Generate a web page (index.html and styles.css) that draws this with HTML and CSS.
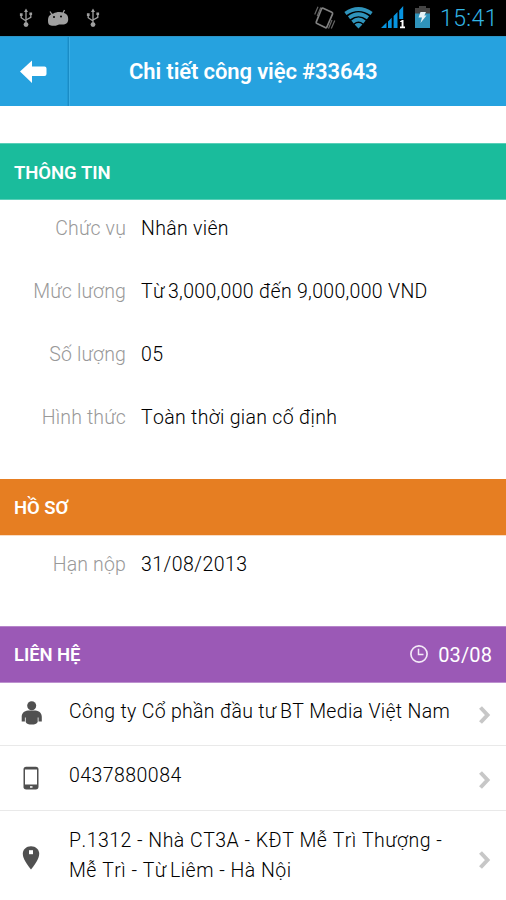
FILE: index.html
```html
<!DOCTYPE html>
<html lang="vi">
<head>
<meta charset="utf-8">
<title>Chi tiết công việc</title>
<link rel="stylesheet" href="styles.css">
</head>
<body>
<svg width="0" height="0" class="defs" aria-hidden="true">
  <symbol id="usb" viewBox="0 0 14 20">
    <path d="M7 3v13M2.2 6.500v3.200L7 13M11.800 6v3.400L7 12" fill="none" stroke="#a0a0a0" stroke-width="1.300"/>
    <path d="M7 .5 9 4H5z M.9 5.200h2.700v2.700H.9z M10.400 4.400h2.700v2.700h-2.700z" fill="#a0a0a0"/>
    <circle cx="7" cy="16.600" r="2.400" fill="#a0a0a0"/>
  </symbol>
  <symbol id="chevron" viewBox="0 0 14 20">
    <path d="M2.500 2.500 9.500 10 2.500 17.500" fill="none" stroke="#c7c7c7" stroke-width="4"/>
  </symbol>
</svg>
<div class="status">
  <div class="notes">
    <svg class="usb" width="14" height="20"><use href="#usb"/></svg>
    <svg class="droid" width="22" height="18" viewBox="0 0 22 18">
      <path d="M3 2.500l2 3M17.500 1l-1.500 3" stroke="#a0a0a0" stroke-width="1.300"/>
      <path d="M1 12C1 6.500 3.500 5 6.500 4.500c2.500-1.600 7-2 10-.7 3.500 1 4.700 3 4.700 6.200 0 4-2 5.500-6 5.500-2-.1-3.500 0-4.500.4-1.500.8-3.700 1-5.700.8C2 16.500 1 15 1 12z" fill="#a0a0a0"/>
      <circle cx="7" cy="8" r="1"/><circle cx="14" cy="7.500" r="1"/>
    </svg>
    <svg class="usb" width="14" height="20"><use href="#usb"/></svg>
  </div>
  <div class="signals">
    <svg width="22" height="24" viewBox="0 0 22 24">
      <path d="M9.200 2.300 17.800 6.300q1.200.6.700 1.800L12.900 21q-.6 1.200-1.700.6L3 17.600q-1.200-.6-.7-1.800L7.500 3q.6-1.200 1.700-.7z" fill="none" stroke="#808080" stroke-width="1.700"/>
      <path d="M.7 8.500 4 .8M3.200 10 6.800 1.500M20.800 14.500l-3.500 8M18 14l-3.500 8.500" stroke="#666" stroke-width="1.200"/>
    </svg>
    <svg class="wifi" width="29" height="22" viewBox="0 0 29 22">
      <g fill="none" stroke="#2f93bb" stroke-width="3.700">
        <path d="M1.400 6.500Q14.500-2.500 27.600 6.500"/><path d="M5 10.700Q14.500 3.800 24 10.700"/><path d="M8.500 15Q14.500 10 20.500 15"/>
      </g>
      <path d="M10.600 17.500q3.900-2.800 7.800 0L14.500 21.500z" fill="#2f93bb"/>
    </svg>
    <svg class="cell" width="25" height="23" viewBox="0 0 25 23">
      <path d="M0 22 5.500 16.500V22zM7 15.500l3.700-3.700V22H7zM12.600 10l3.900-4v16h-3.900zM18.200 4.500 22.200 0v22h-4z" fill="#0794e0"/>
      <path d="M18 13h6.500v9.500H18z"/>
      <path d="M19 15.500 21 14h1.500v6.500H24v1.700h-5v-1.700h1.600V16H19z" fill="#fff"/>
    </svg>
    <svg class="battery" width="15" height="22" viewBox="0 0 15 22">
      <path d="M4 0h7v2h4v6H0V2h4z" fill="#444"/><path d="M0 7.500h15V22H0z" fill="#2f93bb"/>
      <path d="M5.500 6h5.500L9.300 9.500h2.200l-6 7.500 1.500-5.500H3.500z" fill="#e6f3f8"/>
    </svg>
    <span class="clock">15:41</span>
  </div>
</div>
<header class="bar">
  <div class="back">
    <svg width="28" height="24" viewBox="0 0 28 24"><path d="M0 11.500 12 .5v6h12.500q2 0 2 2v5.500q0 2-2 2H12V23z" fill="#fff"/></svg>
  </div>
  <h1>Chi tiết công việc #33643</h1>
</header>
<section class="info">
  <h2 class="green">THÔNG TIN</h2>
  <dl>
    <dt>Chức vụ</dt><dd>Nhân viên</dd>
    <dt>Mức lương</dt><dd>Từ<span class="thin"> </span>3,000,000 đến 9,000,000 VND</dd>
    <dt>Số lượng</dt><dd>05</dd>
    <dt>Hình thức</dt><dd>Toàn thời gian cố định</dd>
  </dl>
</section>
<section class="profile">
  <h2 class="orange">HỒ SƠ</h2>
  <dl><dt>Hạn nộp</dt><dd class="deadline">31/08/2013</dd></dl>
</section>
<section class="contact">
  <h2 class="purple">LIÊN HỆ
    <span class="date">
      <svg width="20" height="20" viewBox="0 0 20 20" fill="none" stroke="#f3e9f7"><circle cx="10" cy="10" r="8.100" stroke-width="1.700"/><path d="M9.500 4.800v5.700h5" stroke-width="1.500"/></svg>
      <span>03/08</span>
    </span>
  </h2>
  <ul>
    <li class="company">
      <svg class="icon" width="22" height="24" viewBox="0 0 22 24" fill="#505050"><circle cx="11.700" cy="4.800" r="4.500"/><path d="M8 9.500h7.500c4 .3 6.300 3 6.300 6.500v4.500h-3.300v-4h-.8V21c-1 2-3 2.500-6 2.500S6.500 23 5.700 21v-4.500h-.8v4H1.700V16c0-3.500 2.300-6.200 6.300-6.500z"/></svg>
      <p>Công ty Cổ phần đầu tư<span class="thin"> </span>BT Media Việt Nam</p>
      <svg class="go" width="14" height="20"><use href="#chevron"/></svg>
    </li>
    <li class="phone">
      <svg class="icon" width="22" height="24" viewBox="0 0 22 24"><rect x="3.500" y=".8" width="15" height="22.700" rx="2.700" fill="#505050"/><path d="M5 3.500h12v15H5z" fill="#fff"/><path d="M10 20.200h2.500v1.500H10z" fill="#fff"/></svg>
      <p>0437880084</p>
      <svg class="go" width="14" height="20"><use href="#chevron"/></svg>
    </li>
    <li class="address">
      <svg class="icon" width="22" height="24" viewBox="0 0 22 24"><path d="M11 .3c4.700 0 8.200 3.200 8.200 7.500 0 5-4.500 11-8.200 15.700C7.300 18.800 2.800 12.800 2.800 7.800 2.800 3.500 6.300.3 11 .3z" fill="#505050"/><path d="M9 4.200h4v4H9z" fill="#fff"/></svg>
      <p>P.1312 - Nhà CT3A - KĐT Mễ Trì Thượng -<br>Mễ Trì - Từ<span class="thin"> </span>Liêm - Hà Nội</p>
      <svg class="go" width="14" height="20"><use href="#chevron"/></svg>
    </li>
  </ul>
</section>
</body>
</html>
```
FILE: styles.css
```css
* { box-sizing: border-box; margin: 0; padding: 0; }
body { width: 506px; height: 900px; overflow: hidden; background: #fff; color: #000; font: 300 19.500px/30px Roboto, "Noto Sans", sans-serif; letter-spacing: .31px; font-kerning: none; }
svg { display: block; flex: none; }
.defs { position: absolute; }
.status { height: 36px; background: #000; display: flex; justify-content: space-between; }
.notes { display: flex; align-items: flex-start; padding: 8px 0 0 19px; }
.droid { margin: 1px 13px 0 14px; }
.notes .usb:last-child { margin-left: 4px; }
.signals { display: flex; align-items: flex-start; padding-top: 6px; }
.wifi { margin: 1px 0 0 8px; }
.cell { margin: 0 0 0 8px; }
.battery { margin: 0 0 0 9px; }
.clock { margin-left: 10px; width: 66px; color: #33b5e5; font-size: 23px; line-height: 26px; letter-spacing: .4px; }
.bar { height: 70px; background: #26a2df; border-top: 1px solid #2c94c6; display: flex; }
.back { width: 69px; padding: 23px 0 0 20px; border-right: 1px solid #198cc6; box-shadow: 1px 0 #3aade4, inset -1px 0 #2198d3; }
.bar h1 { padding-left: 60px; font-size: 22px; line-height: 70px; font-weight: 600; color: #fff; letter-spacing: -.12px; white-space: nowrap; }
h2 { height: 57px; display: flex; justify-content: space-between; padding: 0 14px; color: #fff; font-size: 18.500px; line-height: 59px; font-weight: 600; letter-spacing: -.08px; }
.info { padding-top: 37px; height: 373px; }
.green { background: #1abc9c; line-height: 60px; box-shadow: inset 0 1px #5acfb8, inset 0 -1px #5acfb8; }
.orange { background: #e67e22; box-shadow: inset 0 -1px #f9ddc5; }
.purple { background: #9b59b6; box-shadow: inset 0 1px #b685ca, inset 0 -1px #bd91cf; }
.profile { height: 147px; }
dl { display: grid; grid-template-columns: 126px 1fr; column-gap: 15px; grid-auto-rows: 63px; line-height: 58px; white-space: nowrap; }
dt { text-align: right; color: #999; letter-spacing: .15px; }
.deadline { letter-spacing: .45px; }
.thin { letter-spacing: -1.500px; }
.date { display: flex; font-size: 20px; font-weight: 400; letter-spacing: .1px; }
.date svg { margin: 18px 9px 0 0; }
ul { list-style: none; }
li { display: flex; height: 65px; border-bottom: 1px solid #e9e9e9; padding: 0 14px 0 20px; white-space: nowrap; }
.company { height: 63px; }
.address { height: 95px; border: 0; letter-spacing: .48px; }
.icon { margin-right: 27px; }
.company .icon { margin-top: 18px; }
.company .go { margin-top: 22px; }
.phone { letter-spacing: .45px; }
.phone .icon { margin-top: 20px; }
.phone .go { margin-top: 24px; }
.address .icon { margin-top: 35px; }
.address .go { margin-top: 39px; }
li p { flex: 1; padding-top: 15px; }
.company p { padding-top: 14px; }
```
